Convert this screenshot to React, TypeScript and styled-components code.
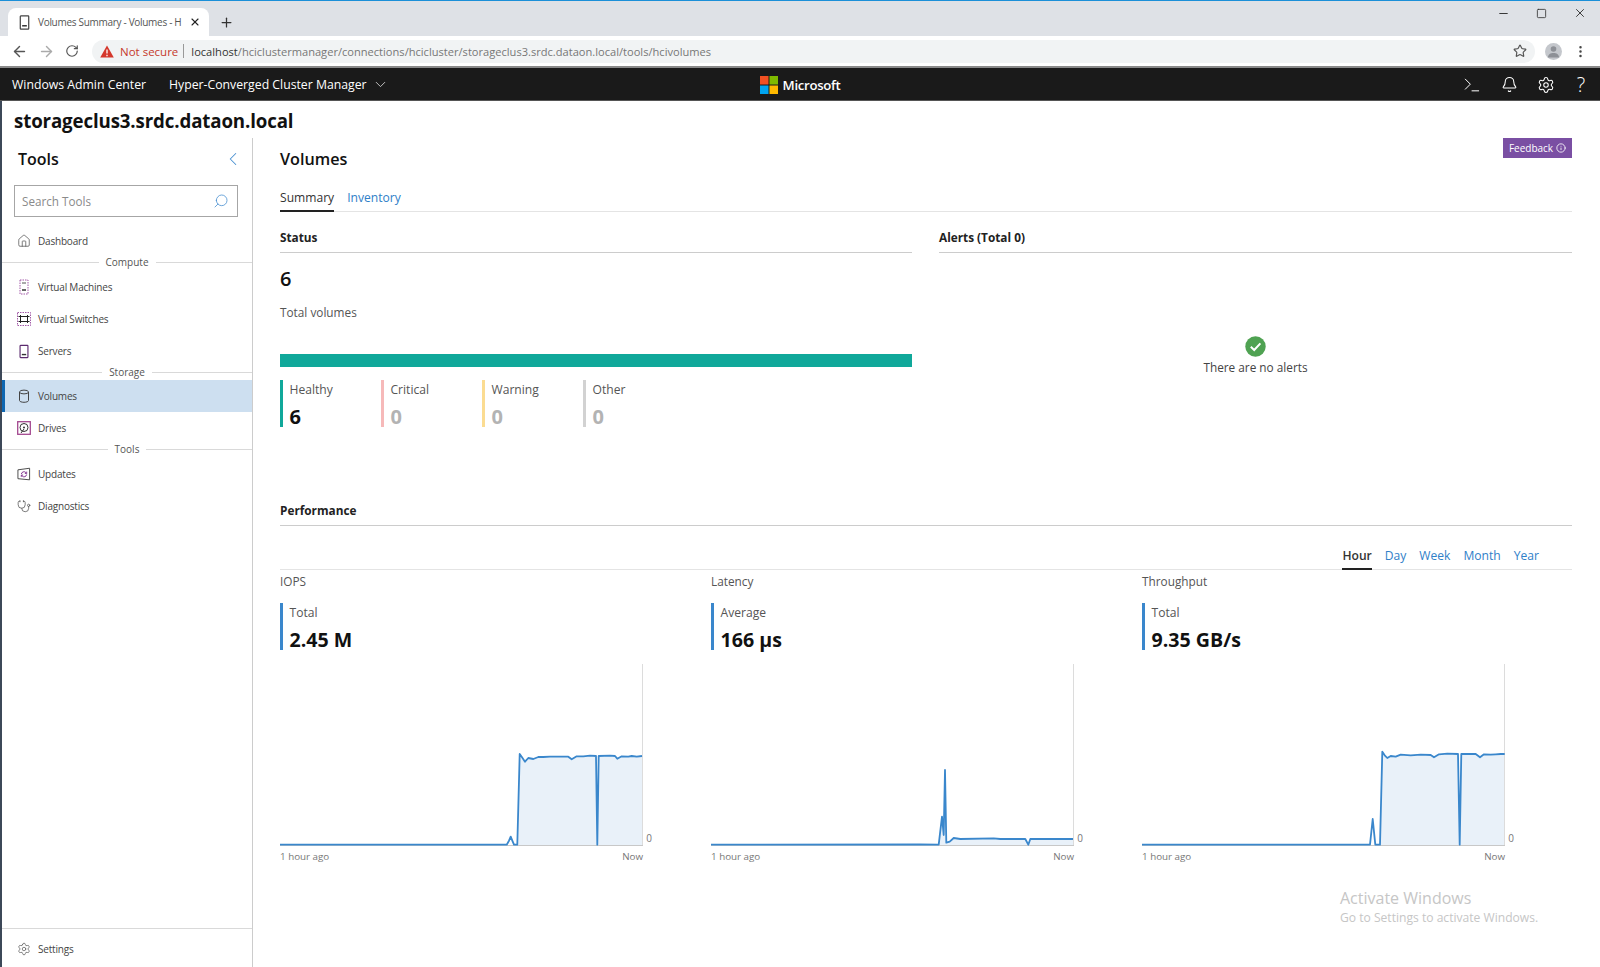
import React from 'react';
import styled, { createGlobalStyle } from 'styled-components';
import {
  ArrowLeft, ArrowRight, Bell, ChevronDown, ChevronLeft, EllipsisVertical, House, Info, Minus, Plus,
  RotateCw, Search, Settings, Square, Star, Stethoscope, Terminal, X,
} from 'lucide-react';

const FONT = `"Open Sans", "Noto Sans", "Liberation Sans", sans-serif`;

const Global = createGlobalStyle`
  html, body { margin: 0; padding: 0; background: #fff; }
  body { font-family: ${FONT}; color: #333; -webkit-font-smoothing: antialiased; }
  * { box-sizing: border-box; }
`;

const Page = styled.div`
  position: relative;
  width: 1600px;
  height: 967px;
  overflow: hidden;
  display: flex;
  flex-direction: column;
  background: #fff;
`;

/* ---------- browser chrome ---------- */
const TabStrip = styled.div`
  height: 36px;
  flex: none;
  display: flex;
  align-items: flex-end;
  padding-left: 8px;
  background: #dee1e6;
  border-top: 1px solid #1b8fd8;
`;
const BrowserTab = styled.div`
  width: 201px;
  height: 28px;
  display: flex;
  align-items: center;
  padding: 0 8px 0 9px;
  background: #fff;
  border-radius: 8px 8px 0 0;
  color: #222;
`;
const TabTitle = styled.span`
  flex: 1;
  margin-left: 6px;
  font-size: 10px;
  letter-spacing: -0.3px;
  color: #555;
  white-space: nowrap;
`;
const NewTab = styled.div`
  margin: 0 0 6px 10px;
  display: flex;
  color: #333;
`;
const WindowControls = styled.div`
  margin-left: auto;
  align-self: flex-start;
  display: flex;
  align-items: center;
  gap: 26px;
  height: 24px;
  padding-right: 13px;
  color: #333;
`;
const Toolbar = styled.div`
  height: 32px;
  flex: none;
  display: flex;
  align-items: center;
  padding: 0 11px;
  background: #fff;
  border-bottom: 2px solid #8a8a8a;
`;
const NavButtons = styled.div`
  width: 81px;
  display: flex;
  align-items: center;
  gap: 10px;
  color: #555;
`;
const Omnibox = styled.div`
  width: 1443px;
  height: 23px;
  display: flex;
  align-items: center;
  padding: 0 8px;
  background: #f1f3f4;
  border-radius: 12px;
  font-size: 11.1px;
`;
const NotSecure = styled.span`
  margin-left: 6px;
  font-size: 11.5px;
  color: #c5392c;
`;
const OmniDivider = styled.span`
  width: 1px;
  height: 14px;
  margin: 0 7px 0 5px;
  background: #999;
`;
const UrlHost = styled.span`
  color: #333;
`;
const UrlPath = styled.span`
  color: #777;
`;
const OmniStar = styled.span`
  margin-left: auto;
  display: flex;
  color: #555;
`;
const Avatar = styled.div`
  margin-left: 10px;
  width: 17px;
  height: 17px;
  border-radius: 50%;
  background: #c4c7cc;
  display: flex;
  align-items: center;
  justify-content: center;
`;
const MoreDots = styled.div`
  margin-left: 11px;
  display: flex;
  color: #444;
`;

/* ---------- admin center header ---------- */
const AppHeader = styled.header`
  height: 33px;
  flex: none;
  display: grid;
  grid-template-columns: 1fr auto 1fr;
  align-items: center;
  padding: 1px 12px 0 12px;
  background: #1a1a1a;
  border-bottom: 1px solid #555;
  color: #fff;
  font-size: 12.25px;
  font-weight: 500;
`;
const HeaderLeft = styled.div`
  display: flex;
  align-items: center;
`;
const Product = styled.span`
  margin-right: 23px;
`;
const HeaderChevron = styled.span`
  display: flex;
  margin-left: 5px;
  color: #ccc;
`;
const Brand = styled.div`
  display: flex;
  align-items: center;
  gap: 5px;
  font-size: 13.2px;
  font-weight: 600;
  letter-spacing: -0.3px;
`;
const HeaderRight = styled.div`
  display: flex;
  justify-content: flex-end;
  align-items: center;
  gap: 19px;
`;
const HelpMark = styled.span`
  width: 14px;
  text-align: center;
  font-size: 20px;
  font-weight: 300;
  line-height: 20px;
`;

/* ---------- page ---------- */
const TitleBar = styled.div`
  height: 37px;
  flex: none;
  display: flex;
  align-items: center;
  padding: 2px 0 0 12px;
  font-size: 18.7px;
  font-weight: 700;
  letter-spacing: -0.13px;
  color: #111;
  border-left: 2px solid #3c4858;
`;
const Body = styled.div`
  flex: 1;
  min-height: 0;
  display: flex;
  border-left: 2px solid #3c4858;
`;

/* ---------- sidebar ---------- */
const Sidebar = styled.aside`
  width: 251px;
  flex: none;
  display: flex;
  flex-direction: column;
  border-right: 1px solid #ccc;
`;
const SideHead = styled.div`
  height: 42px;
  flex: none;
  display: flex;
  align-items: center;
  justify-content: space-between;
  padding: 0 8px 0 16px;
  font-size: 16px;
  font-weight: 600;
  color: #111;
`;
const ChevronBtn = styled.span`
  display: flex;
  color: #4a90d0;
`;
const SearchBox = styled.div`
  height: 32px;
  margin: 5px 14px 8px 12px;
  flex: none;
  display: flex;
  align-items: center;
  justify-content: space-between;
  padding: 0 8px 0 7px;
  border: 1px solid #a6a6a6;
  font-size: 11.7px;
  color: #8a8a8a;
`;
const SearchGlass = styled.span`
  display: flex;
  color: #4a90d0;
  transform: scaleX(-1);
`;
const NavRow = styled.div<{ $active?: boolean }>`
  height: 32px;
  flex: none;
  display: flex;
  align-items: center;
  gap: 7px;
  padding-left: ${(p) => (p.$active ? '12px' : '15px')};
  font-size: 10px;
  letter-spacing: -0.2px;
  color: #444;
  background: ${(p) => (p.$active ? '#cddff0' : 'transparent')};
  border-left: ${(p) => (p.$active ? '3px solid #0f67b1' : 'none')};
`;
const NavIcon = styled.span`
  width: 14px;
  height: 16px;
  flex: none;
  display: flex;
  align-items: center;
  justify-content: center;
  color: #555;
`;
const GroupLabel = styled.div<{ $tall?: boolean }>`
  height: ${(p) => (p.$tall ? '14px' : '13px')};
  padding-bottom: ${(p) => (p.$tall ? '4px' : '3px')};
  flex: none;
  display: flex;
  align-items: center;
  gap: 7px;
  font-size: 10px;
  color: #555;
  &::before, &::after {
    content: '';
    flex: 1;
    height: 1px;
    background: #d9d9d9;
  }
`;
const SideFoot = styled.div`
  margin-top: auto;
  height: 39px;
  flex: none;
  display: flex;
  align-items: center;
  gap: 7px;
  padding: 2px 0 0 15px;
  font-size: 10px;
  letter-spacing: -0.2px;
  color: #444;
  border-top: 1px solid #d9d9d9;
`;

/* ---------- main ---------- */
const Main = styled.main`
  flex: 1;
  min-width: 0;
  padding: 0 28px 0 27px;
`;
const MainTop = styled.div`
  height: 46px;
  display: flex;
  align-items: flex-start;
  justify-content: space-between;
`;
const Heading = styled.h1`
  margin: 11px 0 0;
  font-size: 16.2px;
  line-height: 20px;
  font-weight: 600;
  color: #111;
`;
const Feedback = styled.div`
  width: 69px;
  height: 20px;
  display: flex;
  align-items: center;
  justify-content: center;
  gap: 3px;
  background: #7a4fa3;
  color: #fff;
  font-size: 10px;
`;
const TabBar = styled.div<{ $end?: boolean }>`
  display: flex;
  align-items: flex-end;
  gap: 13px;
  height: ${(p) => (p.$end ? '44px' : '28px')};
  justify-content: ${(p) => (p.$end ? 'flex-end' : 'flex-start')};
  padding-right: ${(p) => (p.$end ? '33px' : '0')};
  border-bottom: 1px solid #e4e4e4;
`;
const TabItem = styled.div<{ $active?: boolean; $bold?: boolean }>`
  height: 27px;
  display: flex;
  align-items: center;
  padding-bottom: 1px;
  margin-bottom: -1px;
  font-size: 12.1px;
  font-weight: ${(p) => (p.$bold ? 600 : 400)};
  color: ${(p) => (p.$active ? '#333' : '#2f80c8')};
  border-bottom: 2px solid ${(p) => (p.$active ? '#222' : 'transparent')};
`;
const SummaryGrid = styled.div`
  margin-top: 12px;
  display: grid;
  grid-template-columns: 632px 633px;
  column-gap: 27px;
`;
const SectionHead = styled.div`
  height: 29px;
  display: flex;
  align-items: center;
  padding-bottom: 2px;
  border-bottom: 1px solid #ccc;
  font-size: 11.8px;
  font-weight: 700;
  color: #222;
`;
const BigNumber = styled.div`
  margin-top: 14px;
  font-size: 20px;
  line-height: 24px;
  font-weight: 600;
  color: #111;
`;
const Caption = styled.div`
  margin-top: 12px;
  font-size: 11.8px;
  line-height: 18px;
  color: #555;
`;
const HealthBar = styled.div`
  margin-top: 33px;
  height: 13px;
  background: #10a89a;
`;
const StatRow = styled.div`
  margin-top: 13px;
  display: flex;
`;
const Stat = styled.div<{ $color: string }>`
  width: 101px;
  height: 47px;
  display: flex;
  flex-direction: column;
  padding: 1px 0 0 6.5px;
  border-left: 3px solid ${(p) => p.$color};
`;
const StatLabel = styled.div`
  font-size: 12.1px;
  line-height: 18px;
  color: #555;
`;
const StatValue = styled.div<{ $muted?: boolean }>`
  margin-top: 6px;
  font-size: 20px;
  line-height: 24px;
  font-weight: 700;
  color: ${(p) => (p.$muted ? '#b3b3b3' : '#111')};
`;
const AlertBody = styled.div`
  margin-top: 83px;
  display: flex;
  flex-direction: column;
  align-items: center;
  gap: 1px;
  font-size: 11.8px;
  line-height: 18px;
  color: #444;
`;
const PerfHead = styled(SectionHead)`
  margin-top: 70px;
`;
const ChartGrid = styled.div`
  display: grid;
  grid-template-columns: repeat(3, 431px);
`;
const ChartColumn = styled.section`
  width: 363px;
`;
const ChartTitle = styled.div`
  margin-top: 2px;
  font-size: 11.8px;
  line-height: 18px;
  color: #555;
`;
const Metric = styled.div`
  margin-top: 13px;
  height: 47px;
  padding: 1px 0 0 6.5px;
  border-left: 3px solid #3a87cc;
`;
const MetricValue = styled.div`
  margin-top: 6px;
  font-size: 19.6px;
  line-height: 24px;
  font-weight: 700;
  color: #111;
  white-space: nowrap;
`;
const ChartBox = styled.div`
  position: relative;
  margin-top: 14px;
  height: 182px;
  svg { display: block; }
`;
const ZeroTick = styled.span`
  position: absolute;
  right: -9px;
  bottom: 1px;
  font-size: 10px;
  line-height: 14px;
  color: #777;
`;
const AxisLabels = styled.div`
  margin-top: 3px;
  display: flex;
  justify-content: space-between;
  font-size: 9.8px;
  line-height: 16px;
  color: #777;
`;
const Watermark = styled.div`
  position: absolute;
  left: 1340px;
  top: 887px;
  color: #c6c6c6;
  font-size: 12.1px;
  line-height: 17px;
  white-space: nowrap;
`;
const WatermarkTitle = styled.div`
  font-size: 16px;
  line-height: 22px;
`;

/* ---------- drawn icons ---------- */
const PhoneGlyph = ({ c = '#5b2a6e', size = 16 }: { c?: string; size?: number }) => (
  <svg width={size} height={size} viewBox="0 0 16 16" fill="none" stroke={c} strokeWidth="1.3">
    <rect x="3.5" y="1" width="9" height="14" rx="0.6" />
    <path d="M5.5 11.5h5" stroke="#333" strokeWidth="1.6" />
  </svg>
);
const VmGlyph = () => (
  <svg width="14" height="16" viewBox="0 0 14 16" fill="none">
    <rect x="3" y="1" width="8" height="14" stroke="#a35aa8" strokeWidth="1" strokeDasharray="1.5 1" />
    <path d="M5 4h4" stroke="#555" strokeWidth="1" />
    <path d="M5 11h4" stroke="#333" strokeWidth="1.5" />
  </svg>
);
const SwitchGlyph = () => (
  <svg width="14" height="14" viewBox="0 0 14 14" fill="none">
    <rect x="0.5" y="0.5" width="13" height="13" stroke="#a35aa8" strokeWidth="1" strokeDasharray="1.5 1" />
    <path d="M3.5 3v8M10.5 3v8M1.5 4.5h11M1.5 9.5h11" stroke="#222" strokeWidth="1" />
  </svg>
);
const CylinderGlyph = () => (
  <svg width="12" height="14" viewBox="0 0 12 14" fill="none" stroke="#444" strokeWidth="1">
    <path d="M1.5 3v8.5c0 1 2 1.8 4.5 1.8s4.5-.8 4.5-1.8V3" />
    <ellipse cx="6" cy="3" rx="4.5" ry="1.9" />
  </svg>
);
const DriveGlyph = () => (
  <svg width="14" height="14" viewBox="0 0 14 14" fill="none">
    <rect x="0.7" y="0.7" width="12.6" height="12.6" stroke="#a3488f" strokeWidth="1.3" />
    <circle cx="7" cy="6.5" r="4" stroke="#333" strokeWidth="1" />
    <circle cx="7" cy="6.5" r="1" fill="#333" />
    <path d="M4 12l3-4" stroke="#333" strokeWidth="1" />
  </svg>
);
const UpdatesGlyph = () => (
  <svg width="15" height="15" viewBox="0 0 15 15" fill="none">
    <path d="M1 2.5l12.5-1.7v12.4L1 12z" stroke="#444" strokeWidth="1" />
    <path d="M4.7 7a2.8 2.8 0 0 1 4.8-1.6l.7.7M10.3 7.5a2.8 2.8 0 0 1-4.8 1.6l-.7-.7" stroke="#7a2a8a" strokeWidth="1" />
    <path d="M10.4 4.4v2h-2M4.6 10.1v-2h2" stroke="#7a2a8a" strokeWidth="0.9" />
  </svg>
);
const WarningGlyph = () => (
  <svg width="14" height="13" viewBox="0 0 14 13">
    <path d="M7 .5L13.8 12.6H.2z" fill="#d4372c" />
    <path d="M7 4.5v4M7 9.8v1.4" stroke="#fff" strokeWidth="1.3" />
  </svg>
);
const MicrosoftLogo = () => (
  <svg width="18" height="18" viewBox="0 0 18 18">
    <rect width="8.5" height="8.5" fill="#f25022" />
    <rect x="9.5" width="8.5" height="8.5" fill="#7fba00" />
    <rect y="9.5" width="8.5" height="8.5" fill="#00a4ef" />
    <rect x="9.5" y="9.5" width="8.5" height="8.5" fill="#ffb900" />
  </svg>
);
const CheckBadge = () => (
  <svg width="21" height="21" viewBox="0 0 21 21">
    <circle cx="10.5" cy="10.5" r="10.2" fill="#4fa252" />
    <path d="M5.8 10.8l3.4 3.2 6.2-6.6" fill="none" stroke="#fff" strokeWidth="2" />
  </svg>
);
const PersonGlyph = () => (
  <svg width="13" height="13" viewBox="0 0 13 13" fill="#8d9096">
    <circle cx="6.5" cy="4" r="2.8" />
    <path d="M1 12.5c0-3 2.5-4.4 5.5-4.4s5.5 1.4 5.5 4.4z" />
  </svg>
);

/* ---------- chart ---------- */
type Pt = [number, number];
const CHART_W = 363;
const CHART_H = 182;

const Sparkline = ({ data, left, fillFrom }: { data: Pt[]; left: number; fillFrom: number }) => {
  const pts = data.map(([x, y]) => [(x - left) / 3, (y - 42) / 3] as Pt);
  const line = pts.map(([x, y], i) => `${i ? 'L' : 'M'}${x.toFixed(1)} ${y.toFixed(1)}`).join(' ');
  const startX = (fillFrom - left) / 3;
  const tail = pts.filter(([x]) => x >= startX);
  const area = `M${startX.toFixed(1)} 181 ` + tail.map(([x, y]) => `L${x.toFixed(1)} ${y.toFixed(1)}`).join(' ') + ` L${tail[tail.length - 1][0].toFixed(1)} 181 Z`;
  return (
    <svg width={CHART_W} height={CHART_H} viewBox={`0 0 ${CHART_W} ${CHART_H}`}>
      <path d={area} fill="#e9f1f9" />
      <path d={`M362.5 0V${CHART_H}`} stroke="#dcdcdc" strokeWidth="1" />
      <path d={`M0 181.5H${CHART_W}`} stroke="#c8c8c8" strokeWidth="1" />
      <path d={line} fill="none" stroke="#3a87cc" strokeWidth="1.8" strokeLinejoin="round" />
    </svg>
  );
};

const IOPS: Pt[] = [[60,584],[740,584],[747,572],[752,560],[757,572],[762,584],[772,584],[779,312],[786,322],[795,335],[805,324],[820,327],[835,321],[850,321],[870,320],[900,320],[925,320],[935,328],[950,319],[970,319],[990,317],[1008,318],[1012,584],[1016,318],[1050,317],[1065,318],[1072,326],[1085,319],[1105,320],[1115,318],[1130,320],[1146,318]];
const LATENCY: Pt[] = [[92,584],[718,583],[775,584],[785,500],[790,555],[794,360],[798,578],[808,575],[820,564],[840,567],[940,565],[960,567],[1035,567],[1044,584],[1050,567],[1178,567]];
const THROUGHPUT: Pt[] = [[124,584],[808,584],[816,507],[824,584],[838,584],[845,305],[852,316],[860,324],[870,318],[885,320],[900,314],[930,316],[960,314],[990,315],[1000,322],[1015,313],[1040,311],[1072,312],[1077,584],[1082,312],[1125,312],[1138,322],[1150,313],[1170,314],[1185,313],[1200,312],[1212,312]];

const CHARTS = [
  { title: 'IOPS', label: 'Total', value: '2.45 M', data: IOPS, left: 60, fillFrom: 775 },
  { title: 'Latency', label: 'Average', value: '166 μs', data: LATENCY, left: 92, fillFrom: 775 },
  { title: 'Throughput', label: 'Total', value: '9.35 GB/s', data: THROUGHPUT, left: 124, fillFrom: 840 },
];

const STATS = [
  { label: 'Healthy', value: 6, color: '#10a89a' },
  { label: 'Critical', value: 0, color: '#f6b9b9' },
  { label: 'Warning', value: 0, color: '#fbdc92' },
  { label: 'Other', value: 0, color: '#d2d2d2' },
];

export default function App() {
  return (
    <Page>
      <Global />
      <TabStrip>
        <BrowserTab>
          <PhoneGlyph c="#444" size={15} />
          <TabTitle>Volumes Summary - Volumes - H</TabTitle>
          <X size={12} strokeWidth={2.2} />
        </BrowserTab>
        <NewTab><Plus size={15} strokeWidth={2} /></NewTab>
        <WindowControls>
          <Minus size={13} strokeWidth={1.8} />
          <Square size={11} strokeWidth={1.8} />
          <X size={14} strokeWidth={1.6} />
        </WindowControls>
      </TabStrip>
      <Toolbar>
        <NavButtons>
          <ArrowLeft size={17} />
          <ArrowRight size={17} color="#aaa" />
          <RotateCw size={14} />
        </NavButtons>
        <Omnibox>
          <WarningGlyph />
          <NotSecure>Not secure</NotSecure>
          <OmniDivider />
          <UrlHost>localhost</UrlHost>
          <UrlPath>/hciclustermanager/connections/hcicluster/storageclus3.srdc.dataon.local/tools/hcivolumes</UrlPath>
          <OmniStar><Star size={14} /></OmniStar>
        </Omnibox>
        <Avatar><PersonGlyph /></Avatar>
        <MoreDots><EllipsisVertical size={15} /></MoreDots>
      </Toolbar>
      <AppHeader>
        <HeaderLeft>
          <Product>Windows Admin Center</Product>
          <span>Hyper-Converged Cluster Manager</span>
          <HeaderChevron><ChevronDown size={17} strokeWidth={1.3} /></HeaderChevron>
        </HeaderLeft>
        <Brand><MicrosoftLogo />Microsoft</Brand>
        <HeaderRight>
          <Terminal size={20} strokeWidth={1.2} />
          <Bell size={17} strokeWidth={1.5} />
          <Settings size={18} strokeWidth={1.4} />
          <HelpMark>?</HelpMark>
        </HeaderRight>
      </AppHeader>
      <TitleBar>storageclus3.srdc.dataon.local</TitleBar>
      <Body>
        <Sidebar>
          <SideHead>Tools<ChevronBtn><ChevronLeft size={22} strokeWidth={1.1} /></ChevronBtn></SideHead>
          <SearchBox>Search Tools<SearchGlass><Search size={16} strokeWidth={1.2} /></SearchGlass></SearchBox>
          <NavRow><NavIcon><House size={14} strokeWidth={1.3} /></NavIcon>Dashboard</NavRow>
          <GroupLabel $tall>Compute</GroupLabel>
          <NavRow><NavIcon><VmGlyph /></NavIcon>Virtual Machines</NavRow>
          <NavRow><NavIcon><SwitchGlyph /></NavIcon>Virtual Switches</NavRow>
          <NavRow><NavIcon><PhoneGlyph size={15} /></NavIcon>Servers</NavRow>
          <GroupLabel>Storage</GroupLabel>
          <NavRow $active><NavIcon><CylinderGlyph /></NavIcon>Volumes</NavRow>
          <NavRow><NavIcon><DriveGlyph /></NavIcon>Drives</NavRow>
          <GroupLabel $tall>Tools</GroupLabel>
          <NavRow><NavIcon><UpdatesGlyph /></NavIcon>Updates</NavRow>
          <NavRow><NavIcon><Stethoscope size={15} strokeWidth={1.3} /></NavIcon>Diagnostics</NavRow>
          <SideFoot><NavIcon><Settings size={14} strokeWidth={1.2} /></NavIcon>Settings</SideFoot>
        </Sidebar>
        <Main>
          <MainTop>
            <Heading>Volumes</Heading>
            <Feedback>Feedback<Info size={10} /></Feedback>
          </MainTop>
          <TabBar>
            <TabItem $active>Summary</TabItem>
            <TabItem>Inventory</TabItem>
          </TabBar>
          <SummaryGrid>
            <div>
              <SectionHead>Status</SectionHead>
              <BigNumber>6</BigNumber>
              <Caption>Total volumes</Caption>
              <HealthBar />
              <StatRow>
                {STATS.map((s) => (
                  <Stat key={s.label} $color={s.color}>
                    <StatLabel>{s.label}</StatLabel>
                    <StatValue $muted={s.value === 0}>{s.value}</StatValue>
                  </Stat>
                ))}
              </StatRow>
            </div>
            <div>
              <SectionHead>Alerts (Total 0)</SectionHead>
              <AlertBody><CheckBadge />There are no alerts</AlertBody>
            </div>
          </SummaryGrid>
          <PerfHead>Performance</PerfHead>
          <TabBar $end>
            <TabItem $active $bold>Hour</TabItem>
            <TabItem>Day</TabItem>
            <TabItem>Week</TabItem>
            <TabItem>Month</TabItem>
            <TabItem>Year</TabItem>
          </TabBar>
          <ChartGrid>
            {CHARTS.map((c) => (
              <ChartColumn key={c.title}>
                <ChartTitle>{c.title}</ChartTitle>
                <Metric>
                  <StatLabel>{c.label}</StatLabel>
                  <MetricValue>{c.value}</MetricValue>
                </Metric>
                <ChartBox>
                  <Sparkline data={c.data} left={c.left} fillFrom={c.fillFrom} />
                  <ZeroTick>0</ZeroTick>
                </ChartBox>
                <AxisLabels><span>1 hour ago</span><span>Now</span></AxisLabels>
              </ChartColumn>
            ))}
          </ChartGrid>
        </Main>
      </Body>
      <Watermark>
        <WatermarkTitle>Activate Windows</WatermarkTitle>
        Go to Settings to activate Windows.
      </Watermark>
    </Page>
  );
}
